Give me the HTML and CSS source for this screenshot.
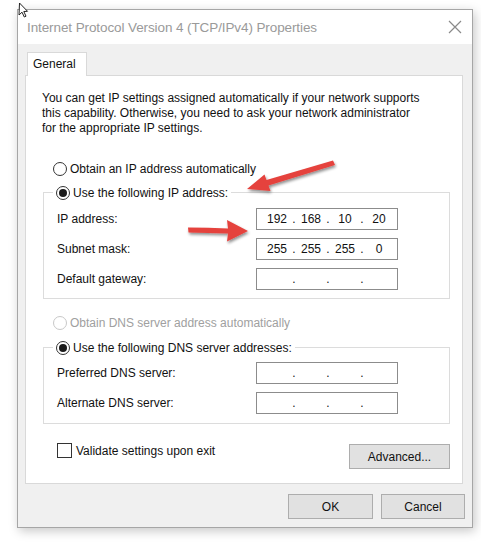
FILE: index.html
```html
<!DOCTYPE html>
<html>
<head>
<meta charset="utf-8">
<link rel="stylesheet" href="styles.css">
</head>
<body>
<div class="window">
  <div class="titlebar">
    <span class="title">Internet Protocol Version 4 (TCP/IPv4) Properties</span>
    <svg class="close" width="14" height="14" viewBox="0 0 14 14"><path d="M1 1L13 13M13 1L1 13" stroke="#8a8a8a" stroke-width="1.2" fill="none"/></svg>
  </div>
  <div class="body">
    <div class="tabs"><div class="tab">General</div></div>
    <div class="panel">
      <p class="desc">You can get IP settings assigned automatically if your network supports this capability. Otherwise, you need to ask your network administrator for the appropriate IP settings.</p>
      <div class="option first"><span class="radio"></span><span>Obtain an IP address automatically</span></div>
      <div class="group g1">
        <div class="legend"><span class="radio checked"></span><span>Use the following IP address:</span></div>
        <div class="fields">
          <span class="label">IP address:</span>
          <div class="ip"><span>192</span><i>.</i><span>168</span><i>.</i><span>10</span><i>.</i><span>20</span></div>
          <span class="label">Subnet mask:</span>
          <div class="ip"><span>255</span><i>.</i><span>255</span><i>.</i><span>255</span><i>.</i><span>0</span></div>
          <span class="label">Default gateway:</span>
          <div class="ip"><span></span><i>.</i><span></span><i>.</i><span></span><i>.</i><span></span></div>
        </div>
      </div>
      <div class="option dns disabled"><span class="radio"></span><span>Obtain DNS server address automatically</span></div>
      <div class="group g2">
        <div class="legend"><span class="radio checked"></span><span>Use the following DNS server addresses:</span></div>
        <div class="fields">
          <span class="label">Preferred DNS server:</span>
          <div class="ip"><span></span><i>.</i><span></span><i>.</i><span></span><i>.</i><span></span></div>
          <span class="label">Alternate DNS server:</span>
          <div class="ip"><span></span><i>.</i><span></span><i>.</i><span></span><i>.</i><span></span></div>
        </div>
      </div>
      <div class="bottomrow">
        <div class="check"><span class="box"></span><span>Validate settings upon exit</span></div>
        <div class="btn adv">Advanced...</div>
      </div>
    </div>
    <div class="actions">
      <div class="btn ok">OK</div>
      <div class="btn cancel">Cancel</div>
    </div>
  </div>
</div>
<svg class="overlay" width="481" height="549" viewBox="0 0 481 549">
  <defs>
    <filter id="sh" x="-20%" y="-50%" width="140%" height="200%">
      <feGaussianBlur in="SourceAlpha" stdDeviation="1.6"/>
      <feOffset dx="1" dy="2" result="b"/>
      <feComponentTransfer><feFuncA type="linear" slope="0.45"/></feComponentTransfer>
      <feMerge><feMergeNode/><feMergeNode in="SourceGraphic"/></feMerge>
    </filter>
  </defs>
  <g fill="#e5423d" filter="url(#sh)">
    <path d="M333 160.5 L335 165 L268.5 185.5 L270.5 191 L247 189 L264.5 174.5 L266.5 180 Z"/>
    <path d="M188 227.5 Q208 227.5 228 228.5 L227 220 L248 231 L227 241.5 L228 233.5 Q208 233 188.5 232.5 Z"/>
  </g>
  <g class="cursor">
    <path d="M19.5 3 L19 15 L22 12.2 L24.3 17 L26 16.2 L23.8 11.5 L27.5 11.3 Z" fill="#fff" stroke="#222" stroke-width="1" stroke-linejoin="round"/>
  </g>
</svg>
</body>
</html>
```
FILE: styles.css
```css
* { box-sizing: border-box; }
html, body { margin: 0; padding: 0; background: #fff; }
body {
  font-family: "Liberation Sans", Arial, sans-serif;
  font-size: 12px;
  color: #111;
  width: 481px;
  height: 549px;
  overflow: hidden;
  position: relative;
}
.window {
  margin: 9px 0 0 17px;
  width: 456px;
  height: 519px;
  border: 1px solid #a6a6a6;
  background: #f0f0f0;
  box-shadow: 2px 3px 10px rgba(0,0,0,0.22);
  display: flex;
  flex-direction: column;
}
.titlebar {
  height: 34px;
  background: #fff;
  display: flex;
  align-items: center;
  justify-content: space-between;
  padding: 0 10px 0 9px;
}
.title {
  color: #9a9a9a;
  font-size: 13.5px;
  letter-spacing: -0.1px;
}
.close { display: block; margin-top: -1px; }
.body {
  flex: 1;
  display: flex;
  flex-direction: column;
  padding: 8px 9px 8px 7px;
}
.tabs { display: flex; height: 23px; }
.tab {
  margin-left: 2px;
  width: 60px;
  height: 24px;
  background: #fff;
  border: 1px solid #d9d9d9;
  border-bottom: none;
  padding: 4px 0 0 5px;
  position: relative;
  z-index: 1;
}
.panel {
  height: 409px;
  background: #fff;
  border: 1px solid #d9d9d9;
  padding: 15px 12px 14px 16px;
  display: flex;
  flex-direction: column;
}
.desc {
  margin: 0;
  line-height: 15px;
  width: 381px;
}
.option, .legend, .check {
  display: flex;
  align-items: center;
  height: 15px;
  gap: 3px;
}
.option { margin-left: 11px; }
.option.first { margin-top: 25px; }
.option.dns { margin-top: 16px; }
.disabled { color: #a0a0a0; }
.radio {
  width: 14px;
  height: 14px;
  border: 1px solid #333;
  border-radius: 50%;
  background: #fff;
  display: flex;
  align-items: center;
  justify-content: center;
  flex: none;
}
.disabled .radio { border-color: #c8c8c8; }
.radio.checked::after {
  content: "";
  width: 8px;
  height: 8px;
  border-radius: 50%;
  background: #1a1a1a;
}
.group {
  margin-left: 1px;
  border: 1px solid #dcdcdc;
  padding: 0 0 8px 13px;
}
.g1 { margin-top: 16px; }
.g2 { margin-top: 17px; padding-bottom: 9px; }
.legend {
  margin: -8px 0 0 -4px;
  padding: 0 3px;
  background: #fff;
  width: fit-content;
}
.fields {
  display: grid;
  grid-template-columns: 199px 142px;
  grid-auto-rows: 22px;
  row-gap: 8px;
  align-items: center;
  margin-top: 8px;
}
.g2 .fields { margin-top: 7px; }
.ip {
  height: 22px;
  border: 1px solid #8c8c8c;
  display: flex;
  align-items: center;
  padding-left: 7px;
  color: #111;
}
.ip span { width: 26px; text-align: center; }
.ip i { font-style: normal; width: 8px; text-align: center; }
.bottomrow {
  margin-top: 20px;
  display: flex;
  justify-content: space-between;
  align-items: flex-start;
}
.check { margin: -1px 0 0 15px; gap: 4px; }
.box {
  width: 15px;
  height: 15px;
  border: 1px solid #333;
  background: #fff;
}
.btn {
  height: 25px;
  background: #e1e1e1;
  border: 1px solid #adadad;
  display: flex;
  align-items: center;
  justify-content: center;
}
.adv { width: 101px; }
.actions {
  margin: 10px -2px 0 0;
  display: flex;
  justify-content: flex-end;
  gap: 8px;
}
.ok { width: 85px; }
.cancel { width: 84px; }
.overlay {
  position: absolute;
  left: 0;
  top: 0;
  pointer-events: none;
}
```
